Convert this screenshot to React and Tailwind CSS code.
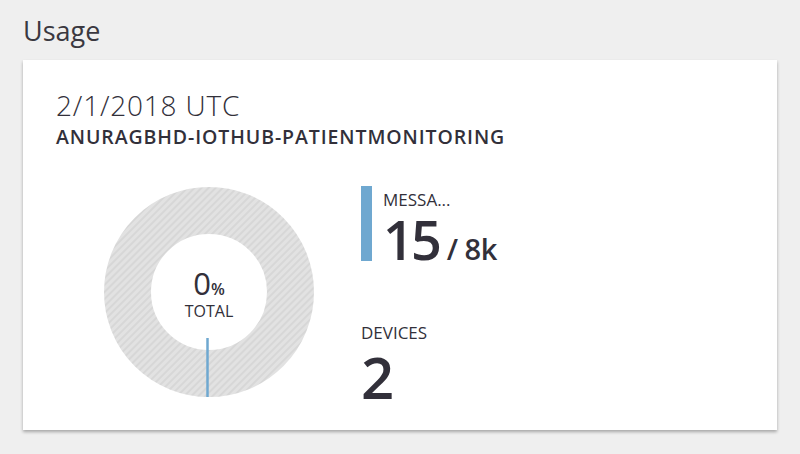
import React from 'react';

const font = { fontFamily: '"Open Sans", "Noto Sans", sans-serif' };

const Donut = () => {
  const r = 81.5;
  return (
    <svg width="212" height="212" viewBox="0 0 212 212" className="block">
      <defs>
        <pattern id="stripes" width="5" height="5" patternUnits="userSpaceOnUse" patternTransform="rotate(45)">
          <rect width="5" height="5" fill="#e2e2e2" />
          <rect width="2" height="5" fill="#d7d7d7" />
        </pattern>
      </defs>
      <circle cx="106" cy="106" r={r} fill="none" stroke="url(#stripes)" strokeWidth="47" />
      <line x1="104.5" y1="152" x2="104.5" y2="211" stroke="#6fa8d0" strokeWidth="2.5" />
    </svg>
  );
};

export default function App() {
  return (
    <div className="w-[800px] h-[454px] bg-[#efefef] text-[#32303a] overflow-hidden" style={font}>
      <div className="pl-[23px] pt-[13px] text-[27px] leading-[36px] text-[#3a3840]">Usage</div>
      <div className="ml-[23px] mt-[11px] w-[754px] h-[370px] bg-white shadow-[0_2px_3px_rgba(0,0,0,0.3)] pl-[33px] pt-[28px]">
        <div className="text-[28px] font-light leading-[34px] tracking-[0.8px]">2/1/2018 UTC</div>
        <div className="text-[19.5px] font-semibold leading-[24px] tracking-[0.9px] mt-[3px]">
          ANURAGBHD-IOTHUB-PATIENTMONITORING
        </div>
        <div className="flex mt-[37px]">
          <div className="relative ml-[47px] w-[212px] h-[212px]">
            <Donut />
            <div className="absolute inset-0 flex flex-col items-center justify-center pt-[4px]">
              <div className="flex items-baseline leading-none">
                <span className="text-[31px] font-normal">0</span>
                <span className="text-[16px] font-semibold">%</span>
              </div>
              <div className="text-[16px] leading-[20px] mt-[2px]">TOTAL</div>
            </div>
          </div>
          <div className="ml-[46px] flex flex-col">
            <div className="flex">
              <div className="w-[11px] h-[75px] bg-[#6fa8d0]" />
              <div className="ml-[11px] pt-[4px]">
                <div className="text-[17px] leading-[20px]">MESSA...</div>
                <div className="flex items-baseline leading-none mt-[2px]">
                  <span className="text-[54px] font-semibold tracking-[-3px]">15</span>
                  <span className="text-[29px] font-semibold ml-[8px] tracking-[-0.5px]">/ 8k</span>
                </div>
              </div>
            </div>
            <div className="mt-[57px] text-[17px] leading-[20px]">DEVICES</div>
            <div className="text-[58px] font-semibold leading-none mt-[5px]">2</div>
          </div>
        </div>
      </div>
    </div>
  );
}
